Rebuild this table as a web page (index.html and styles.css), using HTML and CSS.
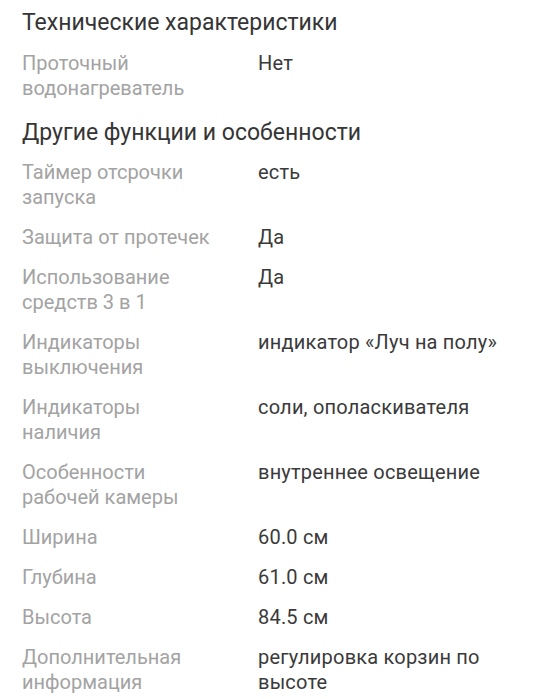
FILE: index.html
```html
<!DOCTYPE html>
<html lang="ru">
<head>
<meta charset="utf-8">
<link rel="stylesheet" href="styles.css">
</head>
<body>
<main class="page">
  <section class="section">
    <h2 class="section-title">Технические характеристики</h2>
    <dl class="specs">
      <dt class="spec-label">Проточный водонагреватель</dt>
      <dd class="spec-value">Нет</dd>
    </dl>
  </section>
  <section class="section">
    <h2 class="section-title">Другие функции и особенности</h2>
    <dl class="specs">
      <dt class="spec-label">Таймер отсрочки запуска</dt>
      <dd class="spec-value">есть</dd>
      <dt class="spec-label">Защита от протечек</dt>
      <dd class="spec-value">Да</dd>
      <dt class="spec-label">Использование средств 3 в 1</dt>
      <dd class="spec-value">Да</dd>
      <dt class="spec-label">Индикаторы выключения</dt>
      <dd class="spec-value">индикатор «Луч на полу»</dd>
      <dt class="spec-label">Индикаторы наличия</dt>
      <dd class="spec-value">соли, ополаскивателя</dd>
      <dt class="spec-label">Особенности рабочей камеры</dt>
      <dd class="spec-value">внутреннее освещение</dd>
      <dt class="spec-label">Ширина</dt>
      <dd class="spec-value">60.0 см</dd>
      <dt class="spec-label">Глубина</dt>
      <dd class="spec-value">61.0 см</dd>
      <dt class="spec-label">Высота</dt>
      <dd class="spec-value">84.5 см</dd>
      <dt class="spec-label">Дополнительная информация</dt>
      <dd class="spec-value">регулировка корзин по высоте</dd>
    </dl>
  </section>
</main>
</body>
</html>
```
FILE: styles.css
```css
html, body {
  margin: 0;
  padding: 0;
  background: #ffffff;
}
body {
  font-family: Roboto, "Noto Sans", sans-serif;
  color: #333333;
}
.page {
  padding: 9px 22px 0 22px;
  display: flex;
  flex-direction: column;
  gap: 18px;
}
.section-title {
  margin: 0 0 13.5px 0;
  font-size: 23px;
  line-height: 28px;
  font-weight: 400;
  color: #353535;
}
.specs {
  margin: 0;
  display: grid;
  grid-template-columns: 195px 1fr;
  column-gap: 41px;
  row-gap: 15px;
  font-size: 20px;
  line-height: 25px;
}
.spec-label {
  margin: 0;
  color: #a3a3a3;
}
.spec-value {
  margin: 0;
  color: #3a3a3a;
  max-width: 262px;
  letter-spacing: 0.2px;
}
```
